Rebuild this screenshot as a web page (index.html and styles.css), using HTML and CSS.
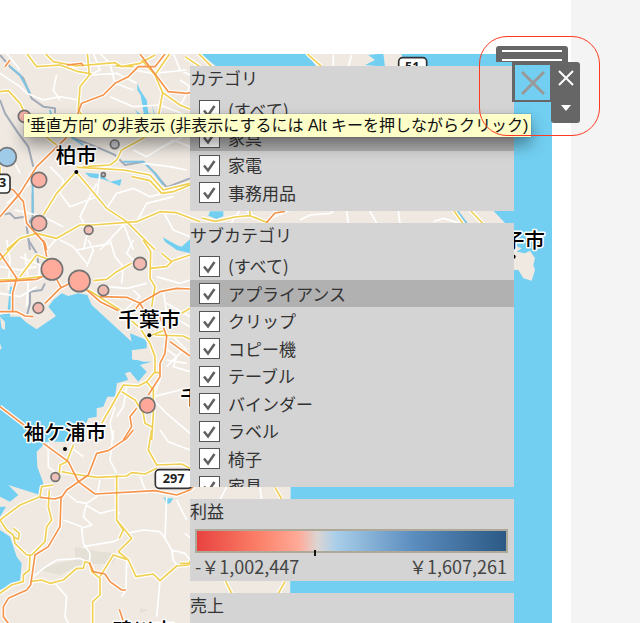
FILE: index.html
```
<!DOCTYPE html>
<html lang="ja">
<head>
    <meta charset="UTF-8">
    <meta name="viewport" content="width=device-width, initial-scale=1.0">
    <title>ダッシュボード</title>
    <link rel="stylesheet" href="styles.css">
</head>
<body>
    <div class="workspace">
        <main class="dashboard">
            <div class="map">
                <svg class="map-canvas" viewBox="0 162 1656 1707" preserveAspectRatio="xMaxYMin slice" role="img" aria-label="地図">
                    <defs>
                        <g id="roads-white">
                            <g transform="translate(0 150)">
                                <path d="M0 70L60 110L80 130L130 150L180 140L235 150M20 10L60 60M170 75L160 120L180 150M270 75L350 70L410 100M300 10L330 40L345 100L400 120M280 10L300 60L270 75M330 140L400 170L480 165L570 200M400 60L460 70L560 60M520 10L540 60L600 90M540 90L570 110L540 170"/>
                                <path d="M0 300L40 330L60 370M20 460L90 400M45 480L130 500L190 530M150 350L190 390L180 430L210 470L290 440L300 370M320 475L350 430L400 415L450 440L490 430M290 400L240 500L265 540L250 600M400 300L440 320L520 270L570 290M430 340L510 350L560 360M470 300L570 250M370 520L400 600M410 515L440 460L520 440M140 600L170 565M300 600L380 515M490 485L520 540L570 560"/>
                            </g>
                            <g transform="translate(0 720)">
                                <path d="M0 80L60 90L110 80M20 0L30 60L25 150M75 40L85 120L80 200M0 160L60 170L110 140M60 50L120 75L115 120M180 0L220 20L260 70M265 0L280 30L260 80M330 0L345 50L370 80L365 130M230 30L330 10M400 0L380 40L410 70M440 130L380 145L320 140M470 110L540 130L570 120M370 215L420 170L400 150M500 190L570 230M490 150L500 220L570 260M490 320L530 350L520 380L570 395M500 380L550 330M500 360L560 370M480 420L460 470L540 450L570 460M345 500L330 550L340 600M380 440L370 500L350 530M520 290L560 330M460 480L500 520L570 580"/>
                            </g>
                            <g transform="translate(0 1290)">
                                <path d="M145 40L145 110L170 130M340 0L330 90L350 130M480 0L505 35L570 60M200 190L230 215L260 220L290 200L300 150M260 220L250 260L275 285L245 295L250 340L270 370L268 398M258 225L300 250L340 240L360 250M190 270L245 290M250 350L340 335L360 325M380 310L430 300L480 305L495 325L500 200M495 325L515 360L520 390L530 405M515 360L555 370L570 390M90 450L130 415L170 390L240 385L260 395M165 460L200 500L195 560L205 580M380 390L378 480L365 500M480 452L470 560M530 210L560 270M420 140L440 190M210 50L250 80"/>
                            </g>
                            <path d="M620 670L680 690L720 630M740 634L790 665L870 630M900 660L930 645L990 640L1000 634M1040 634L1045 670M1110 634L1130 670M1195 634L1200 670M1300 665L1330 655L1380 670M1000 165L1000 200M1055 165L1045 200M680 1460L660 1500M780 1460L785 1500M565 280L620 320M555 1600L600 1640"/>
                        </g>
                        <g id="roads-yellow">
                            <g transform="translate(0 150)">
                                <path d="M80 10L110 50L180 45L235 65L275 72M135 10L160 35L230 48L345 38L365 50L420 40L465 15M345 48L400 50M262 10L268 75L240 110L235 180L250 200M0 125L25 122L60 160L75 190M425 30L465 75L488 128L475 200M488 128L540 165L600 190M465 75L510 10M140 262L170 285"/>
                                <path d="M250 350L330 345L350 330L365 300L435 262M230 352L290 355L370 360L450 375L490 420L570 400M395 380L450 392L485 430L520 425L570 405M228 365L170 430L130 495M228 365L320 475L380 515L465 600M20 600L60 565L110 550L170 565L240 525L280 525L410 515L480 485L530 488L600 515M0 350L0 380"/>
                            </g>
                            <g transform="translate(0 720)">
                                <path d="M0 120L50 118L125 110M60 110L110 45L150 60M55 0L0 60M280 122L320 118L350 95L395 70M430 0L452 35L450 115L465 140L455 200M450 85L500 80L515 65L485 40M510 65L570 45"/>
                                <path d="M265 150L360 210L420 265L450 310L465 350L465 395L440 425L415 438L370 435L345 480L305 550M465 285L550 288L570 298M455 285L490 272M465 398L480 398M440 425L460 450L460 520L455 600M365 455L405 480L430 520L435 550L455 560M545 220L570 205"/>
                            </g>
                            <g transform="translate(0 1290)">
                                <path d="M455 0L445 60L470 105L545 102L570 115M185 125L220 132L290 142L380 138L395 128L435 132L470 115M220 45L200 95L180 105L178 130M350 135L350 270L395 325L355 365L385 390L408 440L460 432L480 452L530 408L565 405L575 385M350 270L370 300L358 325"/>
                                <path d="M160 165L125 170L120 200L60 225L0 270L20 300L40 315L45 340L80 375L95 375L135 335L140 290L155 270L145 230L148 180M90 375L88 420L70 435L70 455L35 465L0 490M90 455L125 450L150 460L190 450L230 415L250 415L255 395L270 400L275 425L300 445L300 495L278 515L278 600M300 440L340 375L380 388M40 295L58 310L55 328L40 320"/>
                            </g>
                            <path d="M555 170L600 200M595 160L640 205M920 160L965 200M605 654L645 664L705 651L750 647L805 669M750 630L750 650M1360 630L1390 672M1410 630L1450 672M825 1462L845 1497M675 1740L695 1780M855 1745L835 1780M540 1690L570 1690"/>
                        </g>
                        <g id="roads-orange">
                            <g transform="translate(0 150)">
                                <path d="M420 12L505 125L560 130L600 122M495 12L465 50L415 50L385 80L345 100L310 135L245 160L232 195M200 262L110 350L60 430L0 500M0 405L40 420L70 455L80 520L135 580L140 600M200 45L245 40L250 48M15 50L30 30"/>
                            </g>
                            <g transform="translate(0 720)">
                                <path d="M0 40L50 115L38 160L38 215M0 215L50 215L75 228L100 230M0 125L110 118L150 100M130 0L140 50M135 190L180 145L230 120M160 100L185 145M255 145L300 185L355 212M300 170L380 172L420 190L480 155L530 145L570 147M400 215L420 190L432 210M480 230L500 290L495 340L480 370L480 410L445 465M410 505L390 530L395 560L370 600M510 305L570 348M0 500L85 565"/>
                            </g>
                            <g transform="translate(0 1290)">
                                <path d="M130 40L205 95L235 155L285 192L465 182L530 195L570 180L600 150M400 0L380 25L325 62L290 70L265 135L200 180L183 205L180 290L145 350L105 375L92 465L80 480L25 505L10 530L10 560L25 580M120 202L165 207L185 200M268 398L280 425L315 432L330 455L365 480L378 480M358 538L372 580"/>
                            </g>
                            <path d="M800 667L825 639L855 634"/>
                        </g>
                    </defs>

                    <rect class="land" x="-2000" y="162" width="3656" height="3000"/>
                    <path class="hills" d="M120 1710L170 1690L225 1680L225 1640L300 1655L350 1660L340 1690L240 1695L180 1725ZM420 1825L445 1830L420 1840Z"/>

                    <!-- rivers and lakes -->
                    <g class="river" transform="translate(0 150)">
                        <path d="M0 15L30 50L70 85L95 145L130 170L165 175L165 190M0 150L15 190L55 250L85 290L100 350M98 430L98 500L80 530L90 600M215 262L300 295L345 315L375 345L430 335L465 370L500 412L570 385M0 495L30 490L45 505L75 500"/>
                        <path d="M85 570L110 610L115 640M135 700L125 720L90 725L90 760L80 800"/>
                        <path class="stream" d="M30 50L60 75L90 130M98 400L98 490M370 335L430 335L465 370L490 405M150 180L155 200M215 262L250 285M1370 480L1400 520"/>
                    </g>
                    <g class="water">
                        <path d="M255 518L300 522L330 545L365 538L360 558L310 538L270 532ZM412 250L420 270L440 300L445 340L465 345L455 310L462 345L432 345L422 285L412 270ZM405 330L425 345L415 345ZM488 712L530 735L545 740L570 718L570 760L530 750L495 725ZM490 1490L500 1495L520 1495L510 1510L500 1512Z"/>
                        <path d="M600 160L920 160L950 200L650 200ZM1095 195L1125 180L1105 165L1150 160L1155 200ZM630 634L670 634L670 649L650 657L625 647Z"/>
                        <path d="M-600 948L60 950L80 968L110 988L168 948L145 920L160 900L185 880L205 888L235 880L262 885L275 915L395 1025L390 1000L440 1020L440 1045L400 1050L395 1075L430 1085L455 1085L420 1095L440 1115L415 1145L390 1115L375 1120L385 1140L350 1155L345 1190L320 1195L310 1220L290 1225L290 1250L265 1255L250 1290L225 1290L200 1325L140 1325L110 1355L112 1400L130 1450L120 1485L25 1455L55 1485L30 1505L0 1490L0 1520L18 1520L0 1550L0 1590L30 1610L50 1670L65 1690L60 1745L35 1755L0 1770L-600 1780Z"/>
                        <path d="M1203 160L1656 160V1900H870L872 1460L1515 669L1478 630L1300 400Z"/>
                        <path d="M30 860L38 860L30 950L0 950L0 945L22 940Z"/>
                    </g>
                    <g class="land">
                        <path d="M1540 735L1565 745L1550 755L1575 760L1590 752L1605 775L1600 795L1605 810L1595 842L1570 835L1555 810L1540 810Z"/>
                        <path d="M395 1050L425 1050L442 1078L398 1080ZM0 950L15 965L15 990L5 985ZM350 1150L385 1140L360 1180ZM320 1190L350 1190L330 1215ZM295 1225L315 1225L300 1245ZM0 1030L5 1045L0 1050Z"/>
                    </g>

                    <use href="#roads-white" class="road-white"/>
                    <use href="#roads-yellow" class="road-casing"/>
                    <use href="#roads-orange" class="road-casing"/>
                    <use href="#roads-yellow" class="road-yellow"/>
                    <use href="#roads-orange" class="road-orange"/>

                    <!-- route number shields -->
                    <g class="shield">
                        <rect x="-40" y="523" width="70" height="56" rx="12"/>
                        <text x="8" y="562">3</text>
                        <rect x="466" y="1409" width="110" height="56" rx="12"/>
                        <text x="521" y="1450">297</text>
                        <rect x="1196" y="173" width="84" height="56" rx="12"/>
                        <text x="1237" y="212">51</text>
                    </g>

                    <!-- city names -->
                    <g class="city">
                        <text x="229" y="490">柏市</text>
                        <text x="448" y="980">千葉市</text>
                        <text x="195" y="1321">袖ケ浦市</text>
                        <text x="572" y="1216">千</text>
                        <text x="1542" y="745">銚子市</text>
                        <text x="430" y="1914">鴨川市</text>
                        <circle cx="229" cy="516" r="6"/>
                        <circle cx="448" cy="1006" r="6"/>
                        <circle cx="195" cy="1347" r="6"/>
                        <circle cx="1541" cy="770" r="6"/>
                    </g>

                    <!-- profit marks -->
                    <g class="marks">
                        <circle cx="73" cy="349" r="18" fill="#f5b3a8"/>
                        <circle cx="21" cy="471" r="28" fill="#9fcae8"/>
                        <circle cx="117" cy="540" r="23" fill="#fab0a2"/>
                        <circle cx="117" cy="670" r="23" fill="#f6b3a8"/>
                        <circle cx="266" cy="690" r="13" fill="#edbdb5"/>
                        <circle cx="344" cy="433" r="13" fill="#c4c6cc"/>
                        <circle cx="310" cy="524" r="6" fill="#c9c9cc"/>
                        <circle cx="156" cy="808" r="32" fill="#ffab9b"/>
                        <circle cx="238" cy="843" r="32" fill="#ffab9b"/>
                        <circle cx="310" cy="871" r="16" fill="#eebbb3"/>
                        <circle cx="115" cy="924" r="16" fill="#f1b9af"/>
                        <circle cx="420" cy="791" r="19" fill="#f1b9b0"/>
                        <circle cx="442" cy="1216" r="23" fill="#ffa798"/>
                        <circle cx="166" cy="1431" r="13" fill="#edc0b9"/>
                    </g>
                </svg>

                <div class="filters">
                    <section class="panel panel-category">
                        <h2>カテゴリ</h2>
                        <ul class="check-list">
                            <li><label><input type="checkbox" checked>(すべて)</label></li>
                            <li class="active"><label><input type="checkbox" checked>家具</label></li>
                            <li><label><input type="checkbox" checked>家電</label></li>
                            <li><label><input type="checkbox" checked>事務用品</label></li>
                        </ul>
                    </section>

                    <section class="panel panel-sub">
                        <h2>サブカテゴリ</h2>
                        <ul class="check-list">
                            <li><label><input type="checkbox" checked>(すべて)</label></li>
                            <li class="active"><label><input type="checkbox" checked>アプライアンス</label></li>
                            <li><label><input type="checkbox" checked>クリップ</label></li>
                            <li><label><input type="checkbox" checked>コピー機</label></li>
                            <li><label><input type="checkbox" checked>テーブル</label></li>
                            <li><label><input type="checkbox" checked>バインダー</label></li>
                            <li><label><input type="checkbox" checked>ラベル</label></li>
                            <li><label><input type="checkbox" checked>椅子</label></li>
                            <li><label><input type="checkbox" checked>家具</label></li>
                        </ul>
                    </section>

                    <section class="panel panel-profit">
                        <h2>利益</h2>
                        <div class="legend-bar"></div>
                        <div class="legend-range">
                            <span>-￥1,002,447</span>
                            <span>￥1,607,261</span>
                        </div>
                    </section>

                    <section class="panel panel-sales">
                        <h2>売上</h2>
                    </section>
                </div>
            </div>
        </main>
        <aside class="gutter"></aside>

        <div class="tooltip" role="tooltip">'垂直方向' の非表示 (非表示にするには Alt キーを押しながらクリック)</div>

        <div class="container-tools">
            <div class="grip"></div>
            <div class="tools-row">
                <button class="hide-button" type="button" aria-label="非表示">
                    <svg viewBox="0 0 24 24"><path d="M1 1L23 23M23 1L1 23"/></svg>
                </button>
                <div class="side-buttons">
                    <button type="button" aria-label="削除">
                        <svg viewBox="0 0 16 16"><path d="M1 1L15 15M15 1L1 15"/></svg>
                    </button>
                    <button type="button" aria-label="その他のオプション">
                        <svg class="caret" viewBox="0 0 12 8"><path d="M1 1H11L6 7Z"/></svg>
                    </button>
                </div>
            </div>
        </div>
        <div class="highlight-ring"></div>
    </div>
</body>
</html>
```
FILE: styles.css
```
* {
    box-sizing: border-box;
}

body {
    margin: 0;
    background: #fff;
    color: #333;
    font-family: "Noto Sans CJK JP", sans-serif;
    font-size: 17px;
    overflow: hidden;
}

button {
    padding: 0;
    border: none;
    background: none;
    cursor: pointer;
}

.workspace {
    position: relative;
    display: flex;
    height: 100vh;
}

.dashboard {
    flex: 1;
    display: flex;
    padding: 54px 19px 0 0;
}

.gutter {
    width: 69px;
    background: #f4f4f4;
}

/* map */
.map {
    position: relative;
    flex: 1;
    display: flex;
    justify-content: flex-end;
    padding: 12px 38px 0 0;
    overflow: hidden;
}

.map-canvas {
    position: absolute;
    top: 0;
    left: 0;
    width: 100%;
    height: 100%;
}

.land {
    fill: #efe9e2;
}

.hills {
    fill: #e5e0d5;
}

.water {
    fill: #72cff2;
}

.river {
    fill: none;
    stroke: #a3abb9;
    stroke-width: 6px;
    stroke-linejoin: round;
}

.stream {
    stroke: #7cc4e4;
}

.road-white,
.road-casing,
.road-yellow,
.road-orange {
    fill: none;
    stroke: #fff;
    stroke-width: 5px;
    stroke-linejoin: round;
}

.road-casing {
    stroke-width: 12px;
}

.road-yellow {
    stroke: #f0cf52;
}

.road-orange {
    stroke: #f6944c;
}

.shield rect {
    fill: #fff;
    stroke: #333;
    stroke-width: 5px;
}

.shield text {
    fill: #222;
    font: bold 38px "Open Sans", sans-serif;
    text-anchor: middle;
}

.city text {
    fill: #000;
    stroke: #fff;
    stroke-width: 9px;
    stroke-linejoin: round;
    paint-order: stroke;
    font-size: 62px;
    font-weight: 500;
    text-anchor: middle;
}

.marks {
    stroke: #737373;
    stroke-width: 5px;
}

/* filter panels */
.filters {
    position: relative;
    display: flex;
    flex-direction: column;
    gap: 12px;
    width: 324px;
}

.panel {
    flex: none;
    background: #d4d4d4;
    overflow: hidden;
}

.panel h2 {
    height: 30px;
    margin: 0;
    font-size: 17px;
    font-weight: 400;
    line-height: 24px;
}

.panel-category {
    padding-bottom: 5px;
}

.panel-sub {
    height: 264px;
}

.panel-sub h2 {
    height: 29px;
}

.panel-profit {
    height: 82px;
}

.panel-sales {
    flex: 1;
}

.check-list {
    margin: 0;
    padding: 0;
    list-style: none;
}

.check-list li {
    height: 28px;
    padding-left: 9px;
}

.check-list li:nth-child(even) {
    height: 27px;
}

.check-list .active {
    background: #b1b1b1;
}

.check-list label {
    display: flex;
    align-items: center;
    gap: 8px;
    height: 100%;
    line-height: 26px;
}

.check-list input {
    appearance: none;
    width: 21px;
    height: 21px;
    margin: 0;
    border: 1px solid #555;
    background: #fff url("data:image/svg+xml,%3Csvg xmlns='http://www.w3.org/2000/svg' viewBox='0 0 38 38'%3E%3Cpath d='M8 19L16 29L29 10' fill='none' stroke='%23606060' stroke-width='5'/%3E%3C/svg%3E") center no-repeat;
}

/* profit legend */
.legend-bar {
    position: relative;
    height: 24px;
    margin: 0 6px 0 5px;
    border: 2px solid #aea899;
    background: linear-gradient(to right, #e8423f, #fb8068 20%, #ffab99 33%, #dcd5d3 39%, #a9cee9 45%, #5b8dbf 70%, #2c5985);
}

.legend-bar::after {
    content: "";
    position: absolute;
    left: 38%;
    bottom: -5px;
    width: 2px;
    height: 6px;
    background: #111;
}

.legend-range {
    display: flex;
    justify-content: space-between;
    padding: 0 7px 0 5px;
    color: #444;
    font-size: 18px;
    line-height: 26px;
}

/* tooltip */
.tooltip {
    position: absolute;
    top: 114px;
    left: 24px;
    padding: 0 3px;
    background: #fefec8;
    box-shadow: 0 0 1px rgba(0, 0, 0, 0.5), 0 8px 16px rgba(0, 0, 0, 0.4);
    color: #111;
    font-family: "Liberation Sans", "Noto Sans CJK JP", sans-serif;
    font-size: 16px;
    line-height: 23px;
    white-space: nowrap;
}

/* container tools */
.container-tools {
    position: absolute;
    top: 46px;
    right: 60px;
    width: 84px;
}

.grip {
    width: 72px;
    height: 16px;
    padding: 4px 6px;
    border-radius: 3px 3px 0 0;
    background: #666;
}

.grip::before {
    content: "";
    display: block;
    height: 7px;
    border: solid #fff;
    border-width: 2px 0;
}

.tools-row {
    display: flex;
    align-items: flex-start;
    justify-content: flex-end;
}

.tools-row svg {
    display: block;
    width: 16px;
    fill: none;
    stroke: #fff;
    stroke-width: 2px;
}

.hide-button {
    display: flex;
    align-items: center;
    justify-content: center;
    width: 39px;
    height: 40px;
    border: solid #666;
    border-width: 3px 1px 2px 3px;
    background: #72cff2;
}

.hide-button svg {
    width: 24px;
    stroke: #999;
    stroke-width: 3px;
}

.side-buttons {
    display: flex;
    flex-direction: column;
    align-items: center;
    gap: 18px;
    width: 29px;
    height: 61px;
    padding-top: 8px;
    border-radius: 0 3px 3px 3px;
    background: #666;
}

.side-buttons .caret {
    width: 12px;
    fill: #fff;
    stroke: none;
}

.highlight-ring {
    position: absolute;
    top: 36px;
    right: 40px;
    width: 121px;
    height: 100px;
    border: 1px solid #ff3a20;
    border-radius: 28px;
    pointer-events: none;
}
```
